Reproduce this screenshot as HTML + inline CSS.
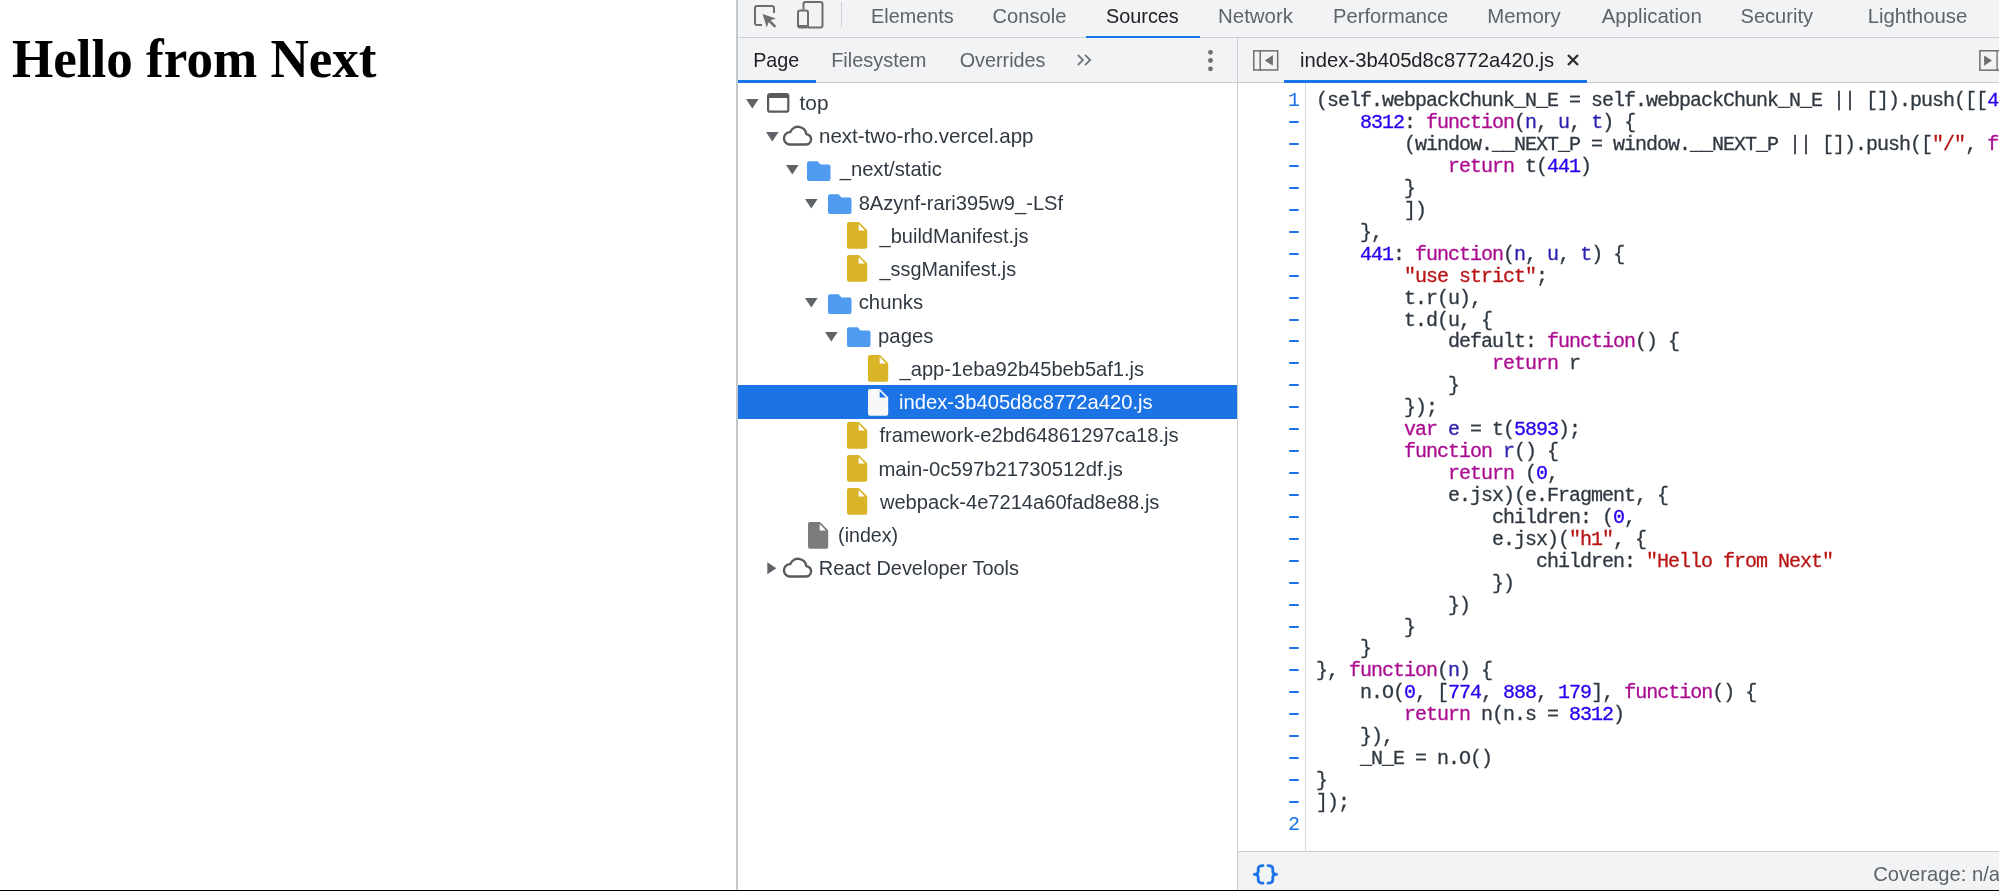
<!DOCTYPE html><html><head><meta charset="utf-8"><title>DevTools</title><style>
html,body{margin:0;padding:0;}
body{width:1999px;height:891px;overflow:hidden;background:#fff;position:relative;}
#w{position:absolute;left:0;top:0;width:1999px;height:891px;will-change:transform;}
.t{position:absolute;height:0;white-space:pre;line-height:0;}
.t>span{position:absolute;left:0;line-height:normal;display:block;}
.a{position:absolute;}
.r{position:absolute;}
.k{color:#ab0d91} .n{color:#2a00f0} .s{color:#b81414} .v{color:#2a1fae}
</style></head><body><div id="w">

<div class="r" style="left:736.3px;top:0;width:1.6px;height:891px;background:#c4c7cc"></div>
<div class="r" style="left:738px;top:0;width:1261px;height:82px;background:#f1f3f4"></div>
<div class="r" style="left:738px;top:36.6px;width:1261px;height:1.2px;background:#cacdd1"></div>
<div class="r" style="left:738px;top:81.5px;width:1261px;height:1.5px;background:#cacdd1"></div>
<div class="r" style="left:738px;top:80.4px;width:78px;height:2.5px;background:#1a73e8"></div>
<div class="r" style="left:1236.5px;top:37.5px;width:1.5px;height:853px;background:#cacdd1"></div>
<div class="r" style="left:1284px;top:80.4px;width:303px;height:2.5px;background:#1a73e8"></div>
<div class="r" style="left:1086.3px;top:35.8px;width:113.7px;height:2.2px;background:#1a73e8"></div>
<svg class="a" style="left:754px;top:5px" width="25" height="24" viewBox="0 0 25 24"><path d="M8 20 H3 A2 2 0 0 1 1 18 V3 A2 2 0 0 1 3 1 H18 A2 2 0 0 1 20 3 V8" fill="none" stroke="#6e6e6e" stroke-width="2"/><path d="M8.5 9 L22 13.5 L16.5 15.2 L22.3 21 L20.5 22.8 L14.7 17 L12.8 22.5 Z" fill="#6e6e6e"/></svg>
<svg class="a" style="left:797px;top:1px" width="27" height="28" viewBox="0 0 27 28"><path d="M6.5 8.5 V3 A2 2 0 0 1 8.5 1 H23.5 A2 2 0 0 1 25.5 3 V24.5 A2 2 0 0 1 23.5 26.5 H11" fill="none" stroke="#6e6e6e" stroke-width="2"/><rect x="1" y="9.5" width="10" height="17" rx="2" fill="none" stroke="#6e6e6e" stroke-width="2"/><rect x="1" y="24" width="10" height="2.5" fill="#6e6e6e"/></svg>
<div class="r" style="left:841px;top:2px;width:1px;height:25px;background:#cdd0d4"></div>
<svg class="a" style="left:1076px;top:53px" width="17" height="14" viewBox="0 0 17 14"><path d="M1.8 1.8 L7 7 L1.8 12.2 M9 1.8 L14.2 7 L9 12.2" fill="none" stroke="#70757a" stroke-width="1.8"/></svg>
<svg class="a" style="left:1206px;top:48px" width="9" height="25" viewBox="0 0 9 25"><circle cx="4.5" cy="4.3" r="2.4" fill="#6e6e6e"/><circle cx="4.5" cy="12.5" r="2.4" fill="#6e6e6e"/><circle cx="4.5" cy="20.8" r="2.4" fill="#6e6e6e"/></svg>
<svg class="a" style="left:1245px;top:44px" width="40" height="34" viewBox="0 0 40 34"><rect x="8.75" y="6.85" width="23.9" height="19.1" fill="none" stroke="#6e6e6e" stroke-width="1.5"/><rect x="14.45" y="6.1" width="1.5" height="20.6" fill="#6e6e6e"/><path d="M19.8 16.4 L27.9 11.1 L27.9 21.8 Z" fill="#6e6e6e"/></svg>
<svg class="a" style="left:1970px;top:44px" width="40" height="34" viewBox="0 0 40 34"><rect x="9.9" y="6.75" width="24" height="19.4" fill="none" stroke="#6e6e6e" stroke-width="1.5"/><rect x="26.4" y="6" width="1.3" height="21" fill="#6e6e6e"/><path d="M14.1 11.4 L22 16.6 L14.1 21.8 Z" fill="#6e6e6e"/></svg>
<svg class="a" style="left:1566px;top:53px" width="14" height="14" viewBox="0 0 14 14"><path d="M2 2 L12 12 M12 2 L2 12" stroke="#303030" stroke-width="2.4"/></svg>
<svg class="a" style="left:745.70px;top:99.00px" width="14" height="11" viewBox="0 0 14 11"><path d="M0 0 L12.6 0 L6.3 9.5 Z" fill="#5f6368"/></svg>
<svg class="a" style="left:767.40px;top:93.00px" width="23" height="21" viewBox="0 0 23 21"><rect x="1.1" y="1.1" width="20.2" height="17.6" rx="2" fill="none" stroke="#5a5a5a" stroke-width="2.2"/><rect x="1" y="1" width="20.4" height="4" fill="#5a5a5a"/></svg>
<svg class="a" style="left:765.60px;top:132.23px" width="14" height="11" viewBox="0 0 14 11"><path d="M0 0 L12.6 0 L6.3 9.5 Z" fill="#5f6368"/></svg>
<svg class="a" style="left:782.10px;top:125.33px" width="31" height="21" viewBox="0 0 31 21"><path d="M8 19.5 H23.5 A5.2 5.2 0 0 0 24.3 9.1 A8.3 8.3 0 0 0 8.3 7.1 A6.2 6.2 0 0 0 8 19.5 Z" fill="none" stroke="#5a5a5a" stroke-width="2.4" stroke-linejoin="round"/></svg>
<svg class="a" style="left:785.60px;top:165.46px" width="14" height="11" viewBox="0 0 14 11"><path d="M0 0 L12.6 0 L6.3 9.5 Z" fill="#5f6368"/></svg>
<svg class="a" style="left:807.30px;top:160.86px" width="25" height="21" viewBox="0 0 25 21"><path d="M2 0.2 H10.5 L13.5 3.5 H21.5 A2 2 0 0 1 23.5 5.5 V17.9 A2 2 0 0 1 21.5 19.9 H2 A2 2 0 0 1 0 17.9 V2.2 A2 2 0 0 1 2 0.2 Z" fill="#4e9bef"/></svg>
<svg class="a" style="left:805.40px;top:198.69px" width="14" height="11" viewBox="0 0 14 11"><path d="M0 0 L12.6 0 L6.3 9.5 Z" fill="#5f6368"/></svg>
<svg class="a" style="left:827.50px;top:194.09px" width="25" height="21" viewBox="0 0 25 21"><path d="M2 0.2 H10.5 L13.5 3.5 H21.5 A2 2 0 0 1 23.5 5.5 V17.9 A2 2 0 0 1 21.5 19.9 H2 A2 2 0 0 1 0 17.9 V2.2 A2 2 0 0 1 2 0.2 Z" fill="#4e9bef"/></svg>
<svg class="a" style="left:847.30px;top:222.22px" width="22" height="28" viewBox="0 0 22 28"><path d="M2 0 H11.9 L20.2 8.3 V24.8 A2 2 0 0 1 18.2 26.8 H2 A2 2 0 0 1 0 24.8 V2 A2 2 0 0 1 2 0 Z" fill="#d9b427"/><path d="M11.7 1.9 L17.9 8.6 H11.7 Z" fill="#ffffff"/></svg>
<svg class="a" style="left:847.30px;top:255.45px" width="22" height="28" viewBox="0 0 22 28"><path d="M2 0 H11.9 L20.2 8.3 V24.8 A2 2 0 0 1 18.2 26.8 H2 A2 2 0 0 1 0 24.8 V2 A2 2 0 0 1 2 0 Z" fill="#d9b427"/><path d="M11.7 1.9 L17.9 8.6 H11.7 Z" fill="#ffffff"/></svg>
<svg class="a" style="left:805.40px;top:298.38px" width="14" height="11" viewBox="0 0 14 11"><path d="M0 0 L12.6 0 L6.3 9.5 Z" fill="#5f6368"/></svg>
<svg class="a" style="left:827.50px;top:293.78px" width="25" height="21" viewBox="0 0 25 21"><path d="M2 0.2 H10.5 L13.5 3.5 H21.5 A2 2 0 0 1 23.5 5.5 V17.9 A2 2 0 0 1 21.5 19.9 H2 A2 2 0 0 1 0 17.9 V2.2 A2 2 0 0 1 2 0.2 Z" fill="#4e9bef"/></svg>
<svg class="a" style="left:825.30px;top:331.61px" width="14" height="11" viewBox="0 0 14 11"><path d="M0 0 L12.6 0 L6.3 9.5 Z" fill="#5f6368"/></svg>
<svg class="a" style="left:847.30px;top:327.01px" width="25" height="21" viewBox="0 0 25 21"><path d="M2 0.2 H10.5 L13.5 3.5 H21.5 A2 2 0 0 1 23.5 5.5 V17.9 A2 2 0 0 1 21.5 19.9 H2 A2 2 0 0 1 0 17.9 V2.2 A2 2 0 0 1 2 0.2 Z" fill="#4e9bef"/></svg>
<svg class="a" style="left:867.50px;top:355.14px" width="22" height="28" viewBox="0 0 22 28"><path d="M2 0 H11.9 L20.2 8.3 V24.8 A2 2 0 0 1 18.2 26.8 H2 A2 2 0 0 1 0 24.8 V2 A2 2 0 0 1 2 0 Z" fill="#d9b427"/><path d="M11.7 1.9 L17.9 8.6 H11.7 Z" fill="#ffffff"/></svg>
<div class="r" style="left:738px;top:385.3px;width:498.5px;height:33.4px;background:#1b73e6"></div>
<svg class="a" style="left:867.50px;top:388.67px" width="22" height="28" viewBox="0 0 22 28"><path d="M2 0 H11.9 L20.2 8.3 V24.8 A2 2 0 0 1 18.2 26.8 H2 A2 2 0 0 1 0 24.8 V2 A2 2 0 0 1 2 0 Z" fill="#f8f8f8"/><path d="M11.7 1.9 L17.9 8.6 H11.7 Z" fill="#1b73e6"/></svg>
<svg class="a" style="left:847.30px;top:421.60px" width="22" height="28" viewBox="0 0 22 28"><path d="M2 0 H11.9 L20.2 8.3 V24.8 A2 2 0 0 1 18.2 26.8 H2 A2 2 0 0 1 0 24.8 V2 A2 2 0 0 1 2 0 Z" fill="#d9b427"/><path d="M11.7 1.9 L17.9 8.6 H11.7 Z" fill="#ffffff"/></svg>
<svg class="a" style="left:847.30px;top:454.83px" width="22" height="28" viewBox="0 0 22 28"><path d="M2 0 H11.9 L20.2 8.3 V24.8 A2 2 0 0 1 18.2 26.8 H2 A2 2 0 0 1 0 24.8 V2 A2 2 0 0 1 2 0 Z" fill="#d9b427"/><path d="M11.7 1.9 L17.9 8.6 H11.7 Z" fill="#ffffff"/></svg>
<svg class="a" style="left:847.30px;top:488.06px" width="22" height="28" viewBox="0 0 22 28"><path d="M2 0 H11.9 L20.2 8.3 V24.8 A2 2 0 0 1 18.2 26.8 H2 A2 2 0 0 1 0 24.8 V2 A2 2 0 0 1 2 0 Z" fill="#d9b427"/><path d="M11.7 1.9 L17.9 8.6 H11.7 Z" fill="#ffffff"/></svg>
<svg class="a" style="left:807.60px;top:521.59px" width="22" height="28" viewBox="0 0 22 28"><path d="M2 0 H11.9 L20.2 8.3 V24.8 A2 2 0 0 1 18.2 26.8 H2 A2 2 0 0 1 0 24.8 V2 A2 2 0 0 1 2 0 Z" fill="#7b7b7b"/><path d="M11.7 1.9 L17.9 8.6 H11.7 Z" fill="#ffffff"/></svg>
<svg class="a" style="left:767.40px;top:562.22px" width="10" height="13" viewBox="0 0 10 13"><path d="M0.3 0.3 L9.3 6.3 L0.3 12.3 Z" fill="#5f6368"/></svg>
<svg class="a" style="left:781.90px;top:557.32px" width="31" height="21" viewBox="0 0 31 21"><path d="M8 19.5 H23.5 A5.2 5.2 0 0 0 24.3 9.1 A8.3 8.3 0 0 0 8.3 7.1 A6.2 6.2 0 0 0 8 19.5 Z" fill="none" stroke="#5a5a5a" stroke-width="2.4" stroke-linejoin="round"/></svg>
<div class="r" style="left:1304.5px;top:83px;width:1.5px;height:768px;background:#d5d7da"></div>
<div class="r" style="left:1238px;top:851px;width:761px;height:1.3px;background:#cacdd1"></div>
<div class="r" style="left:1238px;top:852.3px;width:761px;height:37.5px;background:#f1f3f4"></div>
<svg class="a" style="left:1251.8px;top:863.6px" width="28" height="22" viewBox="0 0 28 22"><path d="M11 1.6 C8 1.6 6.2 2.6 6.2 5 V7.6 C6.2 9.4 5 10.4 2.4 10.4 C5 10.4 6.2 11.4 6.2 13.2 V15.8 C6.2 18.2 8 19.2 11 19.2 M16 1.6 C19 1.6 20.8 2.6 20.8 5 V7.6 C20.8 9.4 22 10.4 24.6 10.4 C22 10.4 20.8 11.4 20.8 13.2 V15.8 C20.8 18.2 19 19.2 16 19.2" fill="none" stroke="#1a73e8" stroke-width="2.8" stroke-linecap="round" stroke-linejoin="round"/></svg>
<div class="t" style="left:1316.00px;top:106.20px;font-size:20.000px;color:#303942;font-family:'Liberation Mono', monospace;font-weight:normal;letter-spacing:-1.0px;-webkit-text-stroke:0.3px"><span style="bottom:-6.01px">(self.webpackChunk_N_E = self.webpackChunk_N_E || []).push([[<span class="n">4</span></span></div>
<div class="t" style="left:1288.00px;top:106.20px;font-size:20.000px;color:#1a73e8;font-family:'Liberation Mono', monospace;font-weight:normal;letter-spacing:-1.0px"><span style="bottom:-6.01px">1</span></div>
<div class="t" style="left:1316.00px;top:128.13px;font-size:20.000px;color:#303942;font-family:'Liberation Mono', monospace;font-weight:normal;letter-spacing:-1.0px;-webkit-text-stroke:0.3px"><span style="bottom:-6.01px">    <span class="n">8312</span>: <span class="k">function</span>(<span class="v">n</span>, <span class="v">u</span>, <span class="v">t</span>) {</span></div>
<div class="r" style="left:1289px;top:121.13px;width:10px;height:2px;background:#1a73e8;border-radius:1px"></div>
<div class="t" style="left:1316.00px;top:150.06px;font-size:20.000px;color:#303942;font-family:'Liberation Mono', monospace;font-weight:normal;letter-spacing:-1.0px;-webkit-text-stroke:0.3px"><span style="bottom:-6.01px">        (window.__NEXT_P = window.__NEXT_P || []).push([<span class="s">&quot;/&quot;</span>, <span class="k">f</span></span></div>
<div class="r" style="left:1289px;top:143.06px;width:10px;height:2px;background:#1a73e8;border-radius:1px"></div>
<div class="t" style="left:1316.00px;top:171.99px;font-size:20.000px;color:#303942;font-family:'Liberation Mono', monospace;font-weight:normal;letter-spacing:-1.0px;-webkit-text-stroke:0.3px"><span style="bottom:-6.01px">            <span class="k">return</span> t(<span class="n">441</span>)</span></div>
<div class="r" style="left:1289px;top:164.99px;width:10px;height:2px;background:#1a73e8;border-radius:1px"></div>
<div class="t" style="left:1316.00px;top:193.92px;font-size:20.000px;color:#303942;font-family:'Liberation Mono', monospace;font-weight:normal;letter-spacing:-1.0px;-webkit-text-stroke:0.3px"><span style="bottom:-6.01px">        }</span></div>
<div class="r" style="left:1289px;top:186.92px;width:10px;height:2px;background:#1a73e8;border-radius:1px"></div>
<div class="t" style="left:1316.00px;top:215.85px;font-size:20.000px;color:#303942;font-family:'Liberation Mono', monospace;font-weight:normal;letter-spacing:-1.0px;-webkit-text-stroke:0.3px"><span style="bottom:-6.01px">        ])</span></div>
<div class="r" style="left:1289px;top:208.85px;width:10px;height:2px;background:#1a73e8;border-radius:1px"></div>
<div class="t" style="left:1316.00px;top:237.78px;font-size:20.000px;color:#303942;font-family:'Liberation Mono', monospace;font-weight:normal;letter-spacing:-1.0px;-webkit-text-stroke:0.3px"><span style="bottom:-6.01px">    },</span></div>
<div class="r" style="left:1289px;top:230.78px;width:10px;height:2px;background:#1a73e8;border-radius:1px"></div>
<div class="t" style="left:1316.00px;top:259.71px;font-size:20.000px;color:#303942;font-family:'Liberation Mono', monospace;font-weight:normal;letter-spacing:-1.0px;-webkit-text-stroke:0.3px"><span style="bottom:-6.01px">    <span class="n">441</span>: <span class="k">function</span>(<span class="v">n</span>, <span class="v">u</span>, <span class="v">t</span>) {</span></div>
<div class="r" style="left:1289px;top:252.71px;width:10px;height:2px;background:#1a73e8;border-radius:1px"></div>
<div class="t" style="left:1316.00px;top:281.64px;font-size:20.000px;color:#303942;font-family:'Liberation Mono', monospace;font-weight:normal;letter-spacing:-1.0px;-webkit-text-stroke:0.3px"><span style="bottom:-6.01px">        <span class="s">&quot;use strict&quot;</span>;</span></div>
<div class="r" style="left:1289px;top:274.64px;width:10px;height:2px;background:#1a73e8;border-radius:1px"></div>
<div class="t" style="left:1316.00px;top:303.57px;font-size:20.000px;color:#303942;font-family:'Liberation Mono', monospace;font-weight:normal;letter-spacing:-1.0px;-webkit-text-stroke:0.3px"><span style="bottom:-6.01px">        t.r(u),</span></div>
<div class="r" style="left:1289px;top:296.57px;width:10px;height:2px;background:#1a73e8;border-radius:1px"></div>
<div class="t" style="left:1316.00px;top:325.50px;font-size:20.000px;color:#303942;font-family:'Liberation Mono', monospace;font-weight:normal;letter-spacing:-1.0px;-webkit-text-stroke:0.3px"><span style="bottom:-6.01px">        t.d(u, {</span></div>
<div class="r" style="left:1289px;top:318.50px;width:10px;height:2px;background:#1a73e8;border-radius:1px"></div>
<div class="t" style="left:1316.00px;top:347.43px;font-size:20.000px;color:#303942;font-family:'Liberation Mono', monospace;font-weight:normal;letter-spacing:-1.0px;-webkit-text-stroke:0.3px"><span style="bottom:-6.01px">            default: <span class="k">function</span>() {</span></div>
<div class="r" style="left:1289px;top:340.43px;width:10px;height:2px;background:#1a73e8;border-radius:1px"></div>
<div class="t" style="left:1316.00px;top:369.36px;font-size:20.000px;color:#303942;font-family:'Liberation Mono', monospace;font-weight:normal;letter-spacing:-1.0px;-webkit-text-stroke:0.3px"><span style="bottom:-6.01px">                <span class="k">return</span> r</span></div>
<div class="r" style="left:1289px;top:362.36px;width:10px;height:2px;background:#1a73e8;border-radius:1px"></div>
<div class="t" style="left:1316.00px;top:391.29px;font-size:20.000px;color:#303942;font-family:'Liberation Mono', monospace;font-weight:normal;letter-spacing:-1.0px;-webkit-text-stroke:0.3px"><span style="bottom:-6.01px">            }</span></div>
<div class="r" style="left:1289px;top:384.29px;width:10px;height:2px;background:#1a73e8;border-radius:1px"></div>
<div class="t" style="left:1316.00px;top:413.22px;font-size:20.000px;color:#303942;font-family:'Liberation Mono', monospace;font-weight:normal;letter-spacing:-1.0px;-webkit-text-stroke:0.3px"><span style="bottom:-6.01px">        });</span></div>
<div class="r" style="left:1289px;top:406.22px;width:10px;height:2px;background:#1a73e8;border-radius:1px"></div>
<div class="t" style="left:1316.00px;top:435.15px;font-size:20.000px;color:#303942;font-family:'Liberation Mono', monospace;font-weight:normal;letter-spacing:-1.0px;-webkit-text-stroke:0.3px"><span style="bottom:-6.01px">        <span class="k">var</span> <span class="v">e</span> = t(<span class="n">5893</span>);</span></div>
<div class="r" style="left:1289px;top:428.15px;width:10px;height:2px;background:#1a73e8;border-radius:1px"></div>
<div class="t" style="left:1316.00px;top:457.08px;font-size:20.000px;color:#303942;font-family:'Liberation Mono', monospace;font-weight:normal;letter-spacing:-1.0px;-webkit-text-stroke:0.3px"><span style="bottom:-6.01px">        <span class="k">function</span> <span class="v">r</span>() {</span></div>
<div class="r" style="left:1289px;top:450.08px;width:10px;height:2px;background:#1a73e8;border-radius:1px"></div>
<div class="t" style="left:1316.00px;top:479.01px;font-size:20.000px;color:#303942;font-family:'Liberation Mono', monospace;font-weight:normal;letter-spacing:-1.0px;-webkit-text-stroke:0.3px"><span style="bottom:-6.01px">            <span class="k">return</span> (<span class="n">0</span>,</span></div>
<div class="r" style="left:1289px;top:472.01px;width:10px;height:2px;background:#1a73e8;border-radius:1px"></div>
<div class="t" style="left:1316.00px;top:500.94px;font-size:20.000px;color:#303942;font-family:'Liberation Mono', monospace;font-weight:normal;letter-spacing:-1.0px;-webkit-text-stroke:0.3px"><span style="bottom:-6.01px">            e.jsx)(e.Fragment, {</span></div>
<div class="r" style="left:1289px;top:493.94px;width:10px;height:2px;background:#1a73e8;border-radius:1px"></div>
<div class="t" style="left:1316.00px;top:522.87px;font-size:20.000px;color:#303942;font-family:'Liberation Mono', monospace;font-weight:normal;letter-spacing:-1.0px;-webkit-text-stroke:0.3px"><span style="bottom:-6.01px">                children: (<span class="n">0</span>,</span></div>
<div class="r" style="left:1289px;top:515.87px;width:10px;height:2px;background:#1a73e8;border-radius:1px"></div>
<div class="t" style="left:1316.00px;top:544.80px;font-size:20.000px;color:#303942;font-family:'Liberation Mono', monospace;font-weight:normal;letter-spacing:-1.0px;-webkit-text-stroke:0.3px"><span style="bottom:-6.01px">                e.jsx)(<span class="s">&quot;h1&quot;</span>, {</span></div>
<div class="r" style="left:1289px;top:537.80px;width:10px;height:2px;background:#1a73e8;border-radius:1px"></div>
<div class="t" style="left:1316.00px;top:566.73px;font-size:20.000px;color:#303942;font-family:'Liberation Mono', monospace;font-weight:normal;letter-spacing:-1.0px;-webkit-text-stroke:0.3px"><span style="bottom:-6.01px">                    children: <span class="s">&quot;Hello from Next&quot;</span></span></div>
<div class="r" style="left:1289px;top:559.73px;width:10px;height:2px;background:#1a73e8;border-radius:1px"></div>
<div class="t" style="left:1316.00px;top:588.66px;font-size:20.000px;color:#303942;font-family:'Liberation Mono', monospace;font-weight:normal;letter-spacing:-1.0px;-webkit-text-stroke:0.3px"><span style="bottom:-6.01px">                })</span></div>
<div class="r" style="left:1289px;top:581.66px;width:10px;height:2px;background:#1a73e8;border-radius:1px"></div>
<div class="t" style="left:1316.00px;top:610.59px;font-size:20.000px;color:#303942;font-family:'Liberation Mono', monospace;font-weight:normal;letter-spacing:-1.0px;-webkit-text-stroke:0.3px"><span style="bottom:-6.01px">            })</span></div>
<div class="r" style="left:1289px;top:603.59px;width:10px;height:2px;background:#1a73e8;border-radius:1px"></div>
<div class="t" style="left:1316.00px;top:632.52px;font-size:20.000px;color:#303942;font-family:'Liberation Mono', monospace;font-weight:normal;letter-spacing:-1.0px;-webkit-text-stroke:0.3px"><span style="bottom:-6.01px">        }</span></div>
<div class="r" style="left:1289px;top:625.52px;width:10px;height:2px;background:#1a73e8;border-radius:1px"></div>
<div class="t" style="left:1316.00px;top:654.45px;font-size:20.000px;color:#303942;font-family:'Liberation Mono', monospace;font-weight:normal;letter-spacing:-1.0px;-webkit-text-stroke:0.3px"><span style="bottom:-6.01px">    }</span></div>
<div class="r" style="left:1289px;top:647.45px;width:10px;height:2px;background:#1a73e8;border-radius:1px"></div>
<div class="t" style="left:1316.00px;top:676.38px;font-size:20.000px;color:#303942;font-family:'Liberation Mono', monospace;font-weight:normal;letter-spacing:-1.0px;-webkit-text-stroke:0.3px"><span style="bottom:-6.01px">}, <span class="k">function</span>(<span class="v">n</span>) {</span></div>
<div class="r" style="left:1289px;top:669.38px;width:10px;height:2px;background:#1a73e8;border-radius:1px"></div>
<div class="t" style="left:1316.00px;top:698.31px;font-size:20.000px;color:#303942;font-family:'Liberation Mono', monospace;font-weight:normal;letter-spacing:-1.0px;-webkit-text-stroke:0.3px"><span style="bottom:-6.01px">    n.O(<span class="n">0</span>, [<span class="n">774</span>, <span class="n">888</span>, <span class="n">179</span>], <span class="k">function</span>() {</span></div>
<div class="r" style="left:1289px;top:691.31px;width:10px;height:2px;background:#1a73e8;border-radius:1px"></div>
<div class="t" style="left:1316.00px;top:720.24px;font-size:20.000px;color:#303942;font-family:'Liberation Mono', monospace;font-weight:normal;letter-spacing:-1.0px;-webkit-text-stroke:0.3px"><span style="bottom:-6.01px">        <span class="k">return</span> n(n.s = <span class="n">8312</span>)</span></div>
<div class="r" style="left:1289px;top:713.24px;width:10px;height:2px;background:#1a73e8;border-radius:1px"></div>
<div class="t" style="left:1316.00px;top:742.17px;font-size:20.000px;color:#303942;font-family:'Liberation Mono', monospace;font-weight:normal;letter-spacing:-1.0px;-webkit-text-stroke:0.3px"><span style="bottom:-6.01px">    }),</span></div>
<div class="r" style="left:1289px;top:735.17px;width:10px;height:2px;background:#1a73e8;border-radius:1px"></div>
<div class="t" style="left:1316.00px;top:764.10px;font-size:20.000px;color:#303942;font-family:'Liberation Mono', monospace;font-weight:normal;letter-spacing:-1.0px;-webkit-text-stroke:0.3px"><span style="bottom:-6.01px">    _N_E = n.O()</span></div>
<div class="r" style="left:1289px;top:757.10px;width:10px;height:2px;background:#1a73e8;border-radius:1px"></div>
<div class="t" style="left:1316.00px;top:786.03px;font-size:20.000px;color:#303942;font-family:'Liberation Mono', monospace;font-weight:normal;letter-spacing:-1.0px;-webkit-text-stroke:0.3px"><span style="bottom:-6.01px">}</span></div>
<div class="r" style="left:1289px;top:779.03px;width:10px;height:2px;background:#1a73e8;border-radius:1px"></div>
<div class="t" style="left:1316.00px;top:807.96px;font-size:20.000px;color:#303942;font-family:'Liberation Mono', monospace;font-weight:normal;letter-spacing:-1.0px;-webkit-text-stroke:0.3px"><span style="bottom:-6.01px">]);</span></div>
<div class="r" style="left:1289px;top:800.96px;width:10px;height:2px;background:#1a73e8;border-radius:1px"></div>
<div class="t" style="left:1316.00px;top:829.89px;font-size:20.000px;color:#303942;font-family:'Liberation Mono', monospace;font-weight:normal;letter-spacing:-1.0px;-webkit-text-stroke:0.3px"><span style="bottom:-6.01px"></span></div>
<div class="t" style="left:1288.00px;top:829.89px;font-size:20.000px;color:#1a73e8;font-family:'Liberation Mono', monospace;font-weight:normal;letter-spacing:-1.0px"><span style="bottom:-6.01px">2</span></div>
<div class="t" style="left:871.12px;top:23.10px;font-size:19.810px;color:#5f6368;font-family:'Liberation Sans', sans-serif;font-weight:normal;"><span style="bottom:-4.52px">Elements</span></div>
<div class="t" style="left:992.59px;top:23.10px;font-size:20.124px;color:#5f6368;font-family:'Liberation Sans', sans-serif;font-weight:normal;"><span style="bottom:-4.59px">Console</span></div>
<div class="t" style="left:1106.01px;top:23.10px;font-size:19.842px;color:#202124;font-family:'Liberation Sans', sans-serif;font-weight:normal;"><span style="bottom:-4.53px">Sources</span></div>
<div class="t" style="left:1218.06px;top:23.10px;font-size:20.459px;color:#5f6368;font-family:'Liberation Sans', sans-serif;font-weight:normal;"><span style="bottom:-4.67px">Network</span></div>
<div class="t" style="left:1333.09px;top:23.10px;font-size:20.148px;color:#5f6368;font-family:'Liberation Sans', sans-serif;font-weight:normal;"><span style="bottom:-4.60px">Performance</span></div>
<div class="t" style="left:1487.27px;top:23.10px;font-size:20.332px;color:#5f6368;font-family:'Liberation Sans', sans-serif;font-weight:normal;"><span style="bottom:-4.64px">Memory</span></div>
<div class="t" style="left:1601.70px;top:23.10px;font-size:20.472px;color:#5f6368;font-family:'Liberation Sans', sans-serif;font-weight:normal;"><span style="bottom:-4.67px">Application</span></div>
<div class="t" style="left:1740.50px;top:23.10px;font-size:20.099px;color:#5f6368;font-family:'Liberation Sans', sans-serif;font-weight:normal;"><span style="bottom:-4.59px">Security</span></div>
<div class="t" style="left:1867.67px;top:23.10px;font-size:20.390px;color:#5f6368;font-family:'Liberation Sans', sans-serif;font-weight:normal;"><span style="bottom:-4.65px">Lighthouse</span></div>
<div class="t" style="left:753.22px;top:67.60px;font-size:19.736px;color:#202124;font-family:'Liberation Sans', sans-serif;font-weight:normal;"><span style="bottom:-4.51px">Page</span></div>
<div class="t" style="left:831.20px;top:67.60px;font-size:19.956px;color:#5f6368;font-family:'Liberation Sans', sans-serif;font-weight:normal;"><span style="bottom:-4.56px">Filesystem</span></div>
<div class="t" style="left:959.71px;top:67.60px;font-size:19.815px;color:#5f6368;font-family:'Liberation Sans', sans-serif;font-weight:normal;"><span style="bottom:-4.52px">Overrides</span></div>
<div class="t" style="left:1300.09px;top:67.60px;font-size:20.239px;color:#202124;font-family:'Liberation Sans', sans-serif;font-weight:normal;"><span style="bottom:-4.62px">index-3b405d8c8772a420.js</span></div>
<div class="t" style="left:11.97px;top:76.00px;font-size:53.084px;color:#000;font-family:'Liberation Serif', serif;font-weight:bold;transform:scaleY(1.045);transform-origin:0 0;"><span style="bottom:-12.61px">Hello from Next</span></div>
<div class="t" style="left:1873.19px;top:881.40px;font-size:20.207px;color:#5f6368;font-family:'Liberation Sans', sans-serif;font-weight:normal;"><span style="bottom:-4.61px">Coverage: n/a</span></div>
<div class="t" style="left:799.59px;top:110.40px;font-size:20.759px;color:#303942;font-family:'Liberation Sans', sans-serif;font-weight:normal;"><span style="bottom:-4.74px">top</span></div>
<div class="t" style="left:818.97px;top:143.63px;font-size:20.545px;color:#303942;font-family:'Liberation Sans', sans-serif;font-weight:normal;"><span style="bottom:-4.69px">next-two-rho.vercel.app</span></div>
<div class="t" style="left:839.70px;top:176.86px;font-size:20.205px;color:#303942;font-family:'Liberation Sans', sans-serif;font-weight:normal;"><span style="bottom:-4.61px">_next/static</span></div>
<div class="t" style="left:858.70px;top:210.09px;font-size:20.102px;color:#303942;font-family:'Liberation Sans', sans-serif;font-weight:normal;"><span style="bottom:-4.59px">8Azynf-rari395w9_-LSf</span></div>
<div class="t" style="left:879.60px;top:243.32px;font-size:20.018px;color:#303942;font-family:'Liberation Sans', sans-serif;font-weight:normal;"><span style="bottom:-4.57px">_buildManifest.js</span></div>
<div class="t" style="left:879.60px;top:276.55px;font-size:19.806px;color:#303942;font-family:'Liberation Sans', sans-serif;font-weight:normal;"><span style="bottom:-4.52px">_ssgManifest.js</span></div>
<div class="t" style="left:858.69px;top:309.78px;font-size:20.333px;color:#303942;font-family:'Liberation Sans', sans-serif;font-weight:normal;"><span style="bottom:-4.64px">chunks</span></div>
<div class="t" style="left:878.08px;top:343.01px;font-size:20.307px;color:#303942;font-family:'Liberation Sans', sans-serif;font-weight:normal;"><span style="bottom:-4.64px">pages</span></div>
<div class="t" style="left:899.60px;top:376.24px;font-size:20.086px;color:#303942;font-family:'Liberation Sans', sans-serif;font-weight:normal;"><span style="bottom:-4.59px">_app-1eba92b45beb5af1.js</span></div>
<div class="t" style="left:898.99px;top:409.47px;font-size:20.207px;color:#ffffff;font-family:'Liberation Sans', sans-serif;font-weight:normal;"><span style="bottom:-4.61px">index-3b405d8c8772a420.js</span></div>
<div class="t" style="left:879.50px;top:442.70px;font-size:20.172px;color:#303942;font-family:'Liberation Sans', sans-serif;font-weight:normal;"><span style="bottom:-4.61px">framework-e2bd64861297ca18.js</span></div>
<div class="t" style="left:878.48px;top:475.93px;font-size:20.260px;color:#303942;font-family:'Liberation Sans', sans-serif;font-weight:normal;"><span style="bottom:-4.63px">main-0c597b21730512df.js</span></div>
<div class="t" style="left:879.90px;top:509.16px;font-size:20.115px;color:#303942;font-family:'Liberation Sans', sans-serif;font-weight:normal;"><span style="bottom:-4.59px">webpack-4e7214a60fad8e88.js</span></div>
<div class="t" style="left:838.12px;top:542.39px;font-size:19.602px;color:#303942;font-family:'Liberation Sans', sans-serif;font-weight:normal;"><span style="bottom:-4.48px">(index)</span></div>
<div class="t" style="left:818.80px;top:575.62px;font-size:19.959px;color:#303942;font-family:'Liberation Sans', sans-serif;font-weight:normal;"><span style="bottom:-4.56px">React Developer Tools</span></div>
<div class="r" style="left:0;top:889.8px;width:1999px;height:1.2px;background:#000"></div>
</div></body></html>
